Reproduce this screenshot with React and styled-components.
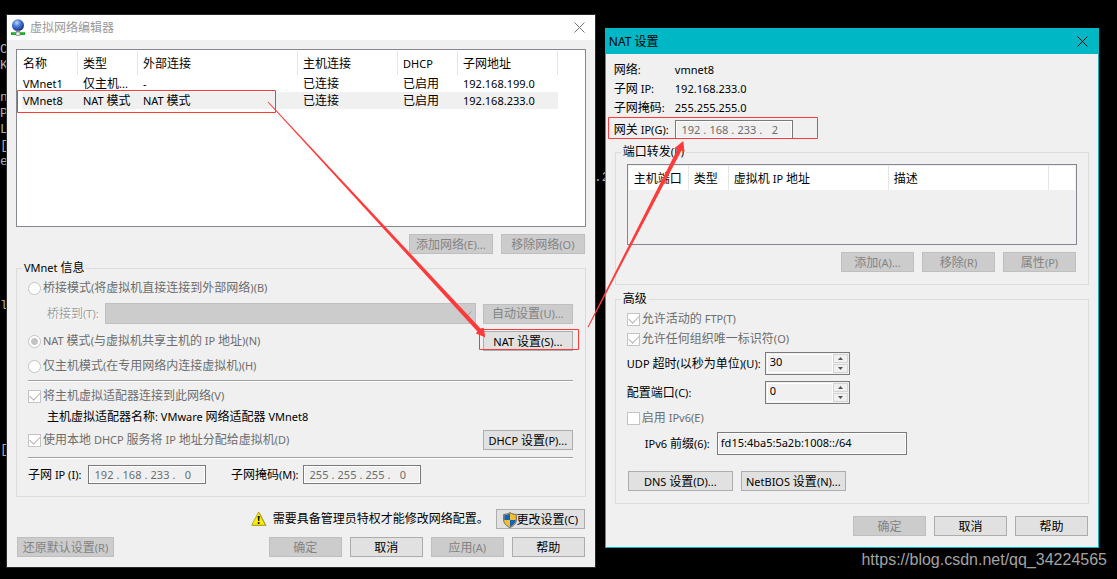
import React from "react"
import styled, { createGlobalStyle, css } from "styled-components"

const GlobalStyle = createGlobalStyle`
  * {
    box-sizing: border-box;
  }

  body {
    margin: 0;
    background: #000;
  }

  body, button, input, select {
    font-family: "Noto Sans", "Noto Sans CJK SC", sans-serif;
    font-size: 12px;
    line-height: 16px;
    color: #000;
  }
`

// latin runs are set one size below the chinese ones
const Text = ({ children }) => (
  <Run>
    {children
      .split(/([\x20-\x7e]+)/)
      .filter(Boolean)
      .map((part, i) =>
        /^[\x20-\x7e]/.test(part) ? (
          <Latin key={i}>{part}</Latin>
        ) : (
          <span key={i}>{part}</span>
        )
      )}
  </Run>
)

const CloseIcon = () => (
  <svg width="11" height="11" viewBox="0 0 11 11" aria-hidden="true">
    <path d="M.5 .5l10 10M10.5 .5l-10 10" stroke="currentColor" fill="none" />
  </svg>
)

const NetworkIcon = () => (
  <svg width="14" height="17" viewBox="0 0 14 17" aria-hidden="true">
    <defs>
      <radialGradient id="globe" cx="40%" cy="30%" r="70%">
        <stop offset="0" stopColor="#b9d4f8" />
        <stop offset="0.45" stopColor="#4a7ad6" />
        <stop offset="1" stopColor="#12308c" />
      </radialGradient>
    </defs>
    <circle cx="7" cy="6.2" r="6" fill="url(#globe)" />
    <path d="M4.5 11.5h5l-1 2.5h-3z" fill="#9a9aa4" />
    <path d="M0 13.3h14v2.6H0z" fill="#0a9a12" />
    <path d="M1 14h12v.8H1z" fill="#27c830" />
    <path d="M5 13h4v3.5H5z" fill="#e8e8e8" stroke="#777" strokeWidth=".6" />
  </svg>
)

const WarningIcon = () => (
  <svg width="16" height="16" viewBox="0 0 16 16" aria-hidden="true">
    <path d="M8.6 1.4l6.9 13.3H1.2z" fill="#8a8478" />
    <path
      d="M7.6 1L14.4 14.2H.7z"
      fill="#ffec00"
      stroke="#a89a10"
      strokeWidth=".8"
      strokeLinejoin="round"
    />
    <path d="M6.6 5h2.2l-.5 5H7.1z" fill="#111" />
    <circle cx="7.7" cy="12" r="1.1" fill="#111" />
  </svg>
)

const ShieldIcon = () => (
  <svg width="14" height="16" viewBox="0 0 14 16" aria-hidden="true">
    <path
      d="M7 .6C5 2 3 2.400 .7 2.400V8c0 3.500 2.700 6 6.300 7.500C10.600 14 13.300 11.500 13.300 8V2.400C11 2.400 9 2 7 .6z"
      fill="#f4bd2c"
      stroke="#5d6670"
      strokeWidth="1"
    />
    <path d="M7 1.600C5.300 2.700 3.400 3.200 1.300 3.200V8H7z" fill="#1263bd" />
    <path d="M7 8v6.700C10 13.400 12.700 11 12.700 8z" fill="#1263bd" />
  </svg>
)

const ChevronIcon = () => (
  <svg width="9" height="6" viewBox="0 0 9 6" aria-hidden="true">
    <path d="M.5 .5l4 4 4-4" stroke="#a2a2a2" fill="none" />
  </svg>
)

const SpinIcon = ({ down }) => (
  <svg width="5" height="3" viewBox="0 0 5 3" aria-hidden="true">
    <path d={down ? "M0 0h5L2.500 3z" : "M0 3h5L2.500 0z"} fill="#555" />
  </svg>
)

const IpField = ({ id, label, octets }) => (
  <IpBox role="group" aria-label={label}>
    {octets.map((octet, i) => (
      <React.Fragment key={i}>
        {i > 0 && <span>.</span>}
        <input
          id={i === 0 ? id : undefined}
          aria-label={`${label} ${i + 1}`}
          defaultValue={octet}
          disabled
        />
      </React.Fragment>
    ))}
  </IpBox>
)

const SpinField = ({ id, value }) => (
  <SpinBox>
    <input id={id} type="text" inputMode="numeric" defaultValue={value} />
    <SpinButtons>
      <button type="button" aria-label="增加">
        <SpinIcon />
      </button>
      <button type="button" aria-label="减少">
        <SpinIcon down />
      </button>
    </SpinButtons>
  </SpinBox>
)

const networks = [
  ["VMnet1", "仅主机...", "-", "已连接", "已启用", "192.168.199.0"],
  ["VMnet8", "NAT 模式", "NAT 模式", "已连接", "已启用", "192.168.233.0"],
]

const networkColumns = [
  { name: "名称", width: 56 },
  { name: "类型", width: 60 },
  { name: "外部连接", width: 160 },
  { name: "主机连接", width: 100 },
  { name: "DHCP", width: 60 },
  { name: "子网地址", width: 100 },
]

// what still shows of the terminal, by its line number
const consoleLines = [
  { row: 1, text: "C" },
  { row: 2, text: "K" },
  { row: 4, text: "n" },
  { row: 5, text: "P" },
  { row: 6, text: "L" },
  { row: 7, text: "[" },
  { row: 8, text: "e" },
  { row: 9, text: ".2", far: true },
  { row: 17, text: "l" },
  { row: 26, text: "[" },
]

const NetworkEditor = () => (
  <EditorWindow aria-label="虚拟网络编辑器">
    <TitleBar>
      <NetworkIcon />
      <h1>虚拟网络编辑器</h1>
      <button type="button" aria-label="关闭">
        <CloseIcon />
      </button>
    </TitleBar>
    <EditorBody>
      <NetworkList>
        <table>
          <colgroup>
            {networkColumns.map(col => (
              <col key={col.name} width={col.width} />
            ))}
          </colgroup>
          <thead>
            <tr>
              {networkColumns.map(col => (
                <th key={col.name}>
                  <Text>{col.name}</Text>
                </th>
              ))}
            </tr>
          </thead>
          <tbody>
            {networks.map(row => (
              <NetworkRow key={row[0]} $selected={row[0] === "VMnet8"}>
                {row.map((cell, i) => (
                  <td key={i}>
                    <Text>{cell}</Text>
                  </td>
                ))}
              </NetworkRow>
            ))}
          </tbody>
        </table>
      </NetworkList>
      <ButtonRow $top={7}>
        <Button $width={84} disabled>
          <Text>添加网络(E)...</Text>
        </Button>
        <Button $width={84} disabled>
          <Text>移除网络(O)</Text>
        </Button>
      </ButtonRow>

      <Group $top={6}>
        <legend>
          <Text>VMnet 信息</Text>
        </legend>
        <Line $top={2}>
          <Choice>
            <Radio name="mode" disabled />
            <Text>桥接模式(将虚拟机直接连接到外部网络)(B)</Text>
          </Choice>
        </Line>
        <Line $top={5} $indent>
          <BridgeLabel htmlFor="bridge">
            <Text>桥接到(T):</Text>
          </BridgeLabel>
          <SelectBox>
            <select id="bridge" disabled />
            <ChevronIcon />
          </SelectBox>
          <Button $width={90} disabled>
            <Text>自动设置(U)...</Text>
          </Button>
        </Line>
        <Line $top={7}>
          <Choice>
            <Radio name="mode" defaultChecked disabled />
            <Text>NAT 模式(与虚拟机共享主机的 IP 地址)(N)</Text>
          </Choice>
          <Button $width={90}>
            <Text>NAT 设置(S)...</Text>
          </Button>
        </Line>
        <Line $top={5}>
          <Choice>
            <Radio name="mode" disabled />
            <Text>仅主机模式(在专用网络内连接虚拟机)(H)</Text>
          </Choice>
        </Line>
        <Divider $top={4} />
        <Line $top={4}>
          <Choice>
            <Checkbox defaultChecked disabled />
            <Text>将主机虚拟适配器连接到此网络(V)</Text>
          </Choice>
        </Line>
        <Line $top={1} $indent>
          <Text>主机虚拟适配器名称: VMware 网络适配器 VMnet8</Text>
        </Line>
        <Line $top={3}>
          <Choice>
            <Checkbox defaultChecked disabled />
            <Text>使用本地 DHCP 服务将 IP 地址分配给虚拟机(D)</Text>
          </Choice>
          <Button $width={90}>
            <Text>DHCP 设置(P)...</Text>
          </Button>
        </Line>
        <Divider $top={7} />
        <AddressLine>
          <label htmlFor="subnet-ip">
            <Text>子网 IP (I):</Text>
          </label>
          <IpField
            id="subnet-ip"
            label="子网 IP"
            octets={["192", "168", "233", "0"]}
          />
          <label htmlFor="subnet-mask">
            <Text>子网掩码(M):</Text>
          </label>
          <IpField
            id="subnet-mask"
            label="子网掩码"
            octets={["255", "255", "255", "0"]}
          />
        </AddressLine>
      </Group>

      <Notice>
        <WarningIcon />
        <Text>需要具备管理员特权才能修改网络配置。</Text>
        <Button $width={89}>
          <ShieldIcon />
          <Text>更改设置(C)</Text>
        </Button>
      </Notice>
      <ButtonRow $top={8}>
        <Restore>
          <Button $width={97} disabled>
            <Text>还原默认设置(R)</Text>
          </Button>
        </Restore>
        <Button disabled>确定</Button>
        <Button>取消</Button>
        <Button disabled>
          <Text>应用(A)</Text>
        </Button>
        <Button>帮助</Button>
      </ButtonRow>
    </EditorBody>
  </EditorWindow>
)

const NatSettings = () => (
  <NatWindow aria-label="NAT 设置">
    <TitleBar $accent>
      <h1>NAT 设置</h1>
      <button type="button" aria-label="关闭">
        <CloseIcon />
      </button>
    </TitleBar>
    <NatBody>
      <Facts>
        <dt>
          <Text>网络:</Text>
        </dt>
        <dd>
          <Text>vmnet8</Text>
        </dd>
        <dt>
          <Text>子网 IP:</Text>
        </dt>
        <dd>
          <Text>192.168.233.0</Text>
        </dd>
        <dt>
          <Text>子网掩码:</Text>
        </dt>
        <dd>
          <Text>255.255.255.0</Text>
        </dd>
      </Facts>
      <Gateway>
        <label htmlFor="gateway">
          <Text>网关 IP(G):</Text>
        </label>
        <IpField
          id="gateway"
          label="网关 IP"
          octets={["192", "168", "233", "2"]}
        />
      </Gateway>

      <Group $top={5}>
        <legend>
          <Text>端口转发(P)</Text>
        </legend>
        <PortList>
          <table>
            <colgroup>
              <col width="60" />
              <col width="40" />
              <col width="160" />
              <col width="160" />
              <col />
            </colgroup>
            <thead>
              <tr>
                <th>主机端口</th>
                <th>类型</th>
                <th>
                  <Text>虚拟机 IP 地址</Text>
                </th>
                <th>描述</th>
                <td />
              </tr>
            </thead>
          </table>
        </PortList>
        <ButtonRow $top={7}>
          <Button disabled>
            <Text>添加(A)...</Text>
          </Button>
          <Button disabled>
            <Text>移除(R)</Text>
          </Button>
          <Button disabled>
            <Text>属性(P)</Text>
          </Button>
        </ButtonRow>
      </Group>

      <Group $top={6}>
        <legend>高级</legend>
        <Line $top={2}>
          <Choice>
            <Checkbox defaultChecked disabled />
            <Text>允许活动的 FTP(T)</Text>
          </Choice>
        </Line>
        <Line>
          <Choice>
            <Checkbox defaultChecked disabled />
            <Text>允许任何组织唯一标识符(O)</Text>
          </Choice>
        </Line>
        <FieldLine $top={3}>
          <label htmlFor="udp">
            <Text>UDP 超时(以秒为单位)(U):</Text>
          </label>
          <SpinField id="udp" value="30" />
        </FieldLine>
        <FieldLine $top={6}>
          <label htmlFor="port">
            <Text>配置端口(C):</Text>
          </label>
          <SpinField id="port" value="0" />
        </FieldLine>
        <Line $top={4}>
          <Choice>
            <Checkbox disabled />
            <Text>启用 IPv6(E)</Text>
          </Choice>
        </Line>
        <PrefixLine>
          <label htmlFor="prefix">
            <Text>IPv6 前缀(6):</Text>
          </label>
          <PrefixInput id="prefix" defaultValue="fd15:4ba5:5a2b:1008::/64" />
        </PrefixLine>
        <SetupButtons>
          <Button $width={105}>
            <Text>DNS 设置(D)...</Text>
          </Button>
          <Button $width={105}>
            <Text>NetBIOS 设置(N)...</Text>
          </Button>
        </SetupButtons>
      </Group>
      <ButtonRow $top={12}>
        <Button disabled>确定</Button>
        <Button>取消</Button>
        <Button>帮助</Button>
      </ButtonRow>
    </NatBody>
  </NatWindow>
)

const Annotations = () => (
  <Marks aria-hidden="true">
    <g fill="none" stroke="#ff3a3a">
      <path d="M17.500 90.500h258v22h-258z" />
      <path d="M479.500 329.500h99v20h-99z" />
      <path d="M608.500 117.500h209v21h-209z" />
    </g>
    <g fill="#ff3a3a">
      <path d="M267.700 102.300l.7-.6L480.500 328.500l3.300-.8 1.400 9.600-9.400-3.800 1.600-2.100z" />
      <path d="M587.500 327l.9.400L681.500 150.500l3 1.500-1.200-11-9.300 7.500 3.300 1z" />
    </g>
  </Marks>
)

const App = () => (
  <>
    <GlobalStyle />
    <Desktop>
      <Console aria-hidden="true">
        {consoleLines.map(line => (
          <ConsoleLine key={line.row} $row={line.row} $far={line.far}>
            {line.text}
          </ConsoleLine>
        ))}
      </Console>
      <NetworkEditor />
      <NatSettings />
      <Annotations />
      <Watermark>https://blog.csdn.net/qq_34224565</Watermark>
    </Desktop>
  </>
)

const Run = styled.span`
  white-space: pre;
`

const Latin = styled.span`
  font-size: 11px;
`

const Desktop = styled.main`
  position: relative;
  display: flex;
  align-items: flex-start;
  gap: 9px;
  min-height: 100vh;
  padding: 14px 18px 11px 6px;
  overflow: hidden;
  background: #000;
`

const Console = styled.div`
  position: absolute;
  top: 42px;
  left: 0;
  display: grid;
  grid-template-columns: 594px auto;
  grid-auto-rows: 16px;
  font: 13px/16px "Liberation Mono", monospace;
  color: #b0b0b0;
`

const ConsoleLine = styled.span`
  grid-row: ${({ $row }) => $row};
  grid-column: ${({ $far }) => ($far ? 2 : 1)};
  justify-self: start;
`

const EditorWindow = styled.section`
  position: relative;
  flex: 590 1 0;
  border: 1px solid #2b2b2b;
  background: #f0f0f0;
`

const NatWindow = styled.section`
  position: relative;
  flex: 494 1 0;
  margin-top: 14px;
  border: 1px solid #00b7c3;
  background: #f0f0f0;
`

const TitleBar = styled.header`
  display: flex;
  align-items: center;
  gap: 5px;
  height: 25px;
  padding: 0 10px 0 4px;
  background: ${({ $accent }) => ($accent ? "#00b7c6" : "#fff")};
  color: ${({ $accent }) => ($accent ? "#000" : "#999")};

  ${({ $accent }) =>
    $accent &&
    css`
      padding-left: 3px;
    `}

  h1 {
    flex: 1;
    margin: 0;
    font-size: 12px;
    font-weight: normal;
  }

  button {
    display: flex;
    padding: 0;
    border: 0;
    background: none;
    color: ${({ $accent }) => ($accent ? "#000" : "#777")};
  }
`

const EditorBody = styled.div`
  padding: 9px 9px 10px;
`

const NatBody = styled.div`
  padding: 6px 9px 11px;
`

const listTable = css`
  border: 1px solid #828790;

  table {
    border-spacing: 0;
    table-layout: fixed;
  }

  th {
    height: 24px;
    padding: 2px 0 0 5px;
    border-right: 1px solid #e5e5e5;
    font-weight: normal;
    text-align: left;
    white-space: nowrap;
  }
`

const NetworkList = styled.div`
  ${listTable}
  height: 178px;
  padding: 1px 0 0 5px;
  background: #fff;

  table {
    width: 536px;
  }

  td {
    height: 17px;
    padding: 1px 0 0 5px;
    line-height: 16px;
    white-space: nowrap;
  }

  th:first-child,
  td:first-child {
    padding-left: 1px;
  }
`

const NetworkRow = styled.tr`
  background: ${({ $selected }) => ($selected ? "#f0f0f0" : "#fff")};
`

const PortList = styled.div`
  ${listTable}
  height: 81px;
  margin-top: 4px;
  padding: 1px;

  table {
    width: 100%;
  }

  thead {
    background: #fff;
  }
`

const Button = styled.button.attrs({ type: "button" })`
  display: flex;
  flex: none;
  align-items: center;
  justify-content: center;
  width: ${({ $width = 73 }) => $width}px;
  height: 20px;
  padding: 1px 0 0;
  border: 1px solid #adadad;
  background: #e1e1e1;
  white-space: nowrap;

  &:disabled {
    border-color: #bfbfbf;
    background: #ccc;
    color: #838383;
  }
`

const ButtonRow = styled.div`
  display: flex;
  justify-content: flex-end;
  gap: 8px;
  margin-top: ${({ $top }) => $top}px;
  padding: 0 1px;
`

const Restore = styled.div`
  flex: 1;
`

const Group = styled.fieldset`
  min-width: 0;
  margin: ${({ $top }) => $top}px 0 0;
  padding: 0 11px 12px;
  border: 1px solid #dcdcdc;

  legend {
    margin-left: -6px;
    padding: 0 2px;
  }
`

const Line = styled.div`
  display: flex;
  align-items: center;
  gap: 7px;
  min-height: 20px;
  margin-top: ${({ $top = 0 }) => $top}px;
  padding: 0 1px 0 ${({ $indent }) => ($indent ? 19 : 0)}px;
`

const Choice = styled.label`
  display: flex;
  flex: 1;
  align-items: center;
  gap: 2px;
  color: #6d6d6d;
`

const Radio = styled.input.attrs({ type: "radio" })`
  appearance: none;
  width: 13px;
  height: 13px;
  margin: 0;
  border: 1px solid #c4c4c4;
  border-radius: 50%;
  background: #fff;

  &:checked {
    background: radial-gradient(circle, #c4c4c4 3px, #fff 4px);
  }
`

const Checkbox = styled.input.attrs({ type: "checkbox" })`
  appearance: none;
  width: 13px;
  height: 13px;
  margin: 0;
  border: 1px solid #c4c4c4;
  background: #fff;

  &:checked::before {
    content: "";
    display: block;
    width: 9px;
    height: 5px;
    margin: 2px 0 0 1px;
    border: solid #b4b4b4;
    border-width: 0 0 1px 1px;
    transform: translateY(-1px) rotate(-45deg);
  }
`

const BridgeLabel = styled.label`
  width: 51px;
  color: #a0a0a0;
  text-shadow: 1px 1px #fff;
`

const SelectBox = styled.div`
  position: relative;
  flex: 1;

  select {
    display: block;
    appearance: none;
    width: 100%;
    height: 21px;
    border: 1px solid #bfbfbf;
    border-radius: 0;
    background: #ccc;
    opacity: 1;
  }

  svg {
    position: absolute;
    top: 8px;
    right: 4px;
  }
`

const Divider = styled.hr`
  height: 2px;
  margin: ${({ $top }) => $top}px 1px 0 0;
  border: 0;
  border-top: 1px solid #a0a0a0;
  background: #fff;
`

const AddressLine = styled.div`
  display: flex;
  align-items: center;
  margin-top: 6px;

  label:first-child {
    width: 60px;
  }

  label:nth-of-type(2) {
    width: 72px;
    margin-left: 25px;
  }
`

const IpBox = styled.div`
  display: flex;
  align-items: center;
  width: 118px;
  height: 19px;
  padding: 0 3px;
  border: 1px solid #7a7a7a;
  box-shadow: inset 0 0 0 1px #fff;
  color: #6d6d6d;
  font-size: 11px;

  input {
    width: 24px;
    height: 15px;
    padding: 0;
    border: 0;
    background: none;
    color: #6d6d6d;
    font-size: 11px;
    text-align: center;
  }

  span {
    width: 4px;
    text-align: center;
  }
`

const Notice = styled.div`
  display: flex;
  align-items: center;
  justify-content: flex-end;
  gap: 6px;
  margin-top: 12px;
  padding-right: 1px;

  button {
    margin-left: 1px;
  }
`

const Facts = styled.dl`
  display: grid;
  grid-template-columns: 61px 1fr;
  grid-auto-rows: 19px;
  align-items: center;
  margin: 0 0 3px -1px;

  dd {
    margin: 0;
  }
`

const Gateway = styled.div`
  display: flex;
  align-items: center;
  margin-left: -1px;

  label {
    width: 61px;
  }
`

const FieldLine = styled.div`
  display: flex;
  align-items: center;
  margin-top: ${({ $top }) => $top}px;

  label {
    width: 138px;
  }
`

const SpinBox = styled.div`
  display: flex;
  width: 85px;
  height: 23px;
  padding: 1px;
  border: 1px solid #7a7a7a;

  input {
    flex: 1;
    min-width: 0;
    padding: 0 2px 3px;
    border: 1px solid #fff;
    background: none;
    font-size: 11px;
  }
`

const SpinButtons = styled.div`
  display: flex;
  flex-direction: column;
  gap: 1px;
  width: 15px;

  button {
    display: flex;
    flex: 1;
    align-items: center;
    justify-content: center;
    padding: 0;
    border: 1px solid #d4d4d4;
    background: #f0f0f0;
  }
`

const PrefixLine = styled.div`
  display: flex;
  align-items: center;
  margin-top: 4px;
  padding-left: 18px;

  label {
    width: 72px;
  }
`

const PrefixInput = styled.input`
  width: 190px;
  height: 23px;
  padding: 0 3px 3px;
  border: 1px solid #7a7a7a;
  background: #f0f0f0;
  box-shadow: inset 0 0 0 1px #fff;
  font-size: 11px;
`

const SetupButtons = styled.div`
  display: flex;
  gap: 8px;
  margin-top: 16px;
  padding-left: 1px;
`

const Marks = styled.svg`
  position: absolute;
  top: 0;
  left: 0;
  width: 100%;
  height: 100%;
  pointer-events: none;
`

const Watermark = styled.div`
  position: absolute;
  right: 10px;
  bottom: 10px;
  font: 16px/18px "Liberation Sans", sans-serif;
  color: #a3a3a3;
`

export default App
